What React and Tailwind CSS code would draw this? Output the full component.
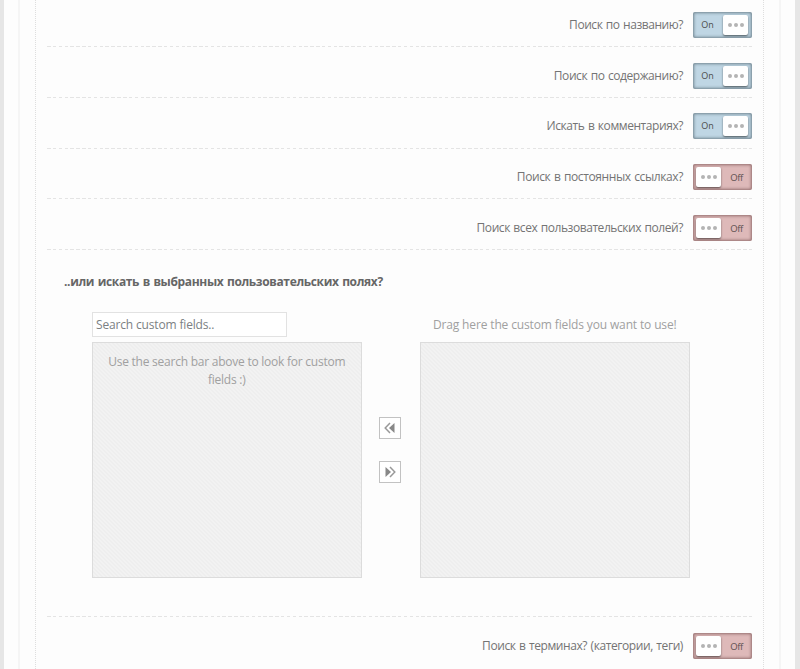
import React from "react";

const rows = [
  { label: "Поиск по названию?", on: true, row: "h-[47px] pt-[12px]", text: "tracking-[-0.45px]" },
  { label: "Поиск по содержанию?", on: true, row: "h-[51px] pt-[16px]", text: "tracking-[-0.43px]" },
  { label: "Искать в комментариях?", on: true, row: "h-[51px] pt-[15px]", text: "tracking-[-0.43px]" },
  { label: "Поиск в постоянных ссылках?", on: false, row: "h-[50px] pt-[15px]", text: "tracking-[-0.39px]" },
  { label: "Поиск всех пользовательских полей?", on: false, row: "h-[51px] pt-[16px]", text: "tracking-[-0.44px]" },
];

function DashedLine() {
  return (
    <div className="h-px w-full shrink-0 bg-[repeating-linear-gradient(90deg,#e4e4e4_0_3.5px,transparent_3.5px_5.85px)]" />
  );
}

function Knob() {
  return (
    <span className="flex h-[20px] w-[25px] items-center justify-center gap-[2px] rounded-[2px] bg-white shadow-[0_1px_2px_rgba(0,0,0,0.55)]">
      <i className="size-[4px] rounded-full bg-[#b4b4b4]" />
      <i className="size-[4px] rounded-full bg-[#b4b4b4]" />
      <i className="size-[4px] rounded-full bg-[#b4b4b4]" />
    </span>
  );
}

function Toggle({ on }) {
  return on ? (
    <div className="flex h-[26px] w-[59px] shrink-0 items-center justify-between rounded-[2px] bg-[#bfd6e4] pr-[4px] shadow-[inset_0_0_3px_1px_rgba(50,65,75,0.55)]">
      <span className="w-[29px] text-center text-[9px] font-medium text-[#4c4c4c]">On</span>
      <Knob />
    </div>
  ) : (
    <div className="flex h-[26px] w-[59px] shrink-0 items-center justify-between rounded-[2px] bg-[#deb9b9] pl-[3px] shadow-[inset_0_0_3px_1px_rgba(85,50,50,0.55)]">
      <Knob />
      <span className="w-[31px] pt-[2px] text-center text-[9.5px] font-medium tracking-[-0.4px] text-[#5e5252]">Off</span>
    </div>
  );
}

function SettingRow({ label, on, row, text }) {
  return (
    <div className={`flex flex-col justify-between ${row}`}>
      <div className="flex h-[26px] justify-end gap-[10px]">
        <span className={`[word-spacing:0.8px] whitespace-nowrap leading-[25px] ${text}`}>{label}</span>
        <Toggle on={on} />
      </div>
      <DashedLine />
    </div>
  );
}

function Box({ children }) {
  return (
    <div className="h-[236px] w-full border border-[#dcdcdc] bg-[linear-gradient(45deg,#f2f2f2_25%,#eeeeee_25%_50%,#f2f2f2_50%_75%,#eeeeee_75%)] bg-size-[4px_4px] bg-clip-padding px-[10px] pt-[10px] text-center leading-[18px] tracking-[-0.24px] text-[#a0a0a0]">
      {children}
    </div>
  );
}

function ArrowButton({ right }) {
  return (
    <button className="flex size-[22px] items-center justify-center border border-[#c2c2c2] bg-white">
      <svg width="12" height="12" viewBox="0 0 12 12" className={right ? "rotate-180" : ""}>
        <path d="M6 1 1.2 6 6 11" fill="none" stroke="#999" strokeWidth="1.5" />
        <path d="M10.5 1v10L5 6z" fill="#888" />
      </svg>
    </button>
  );
}

export default function App() {
  return (
    <div className="flex h-[669px] w-[800px] overflow-hidden border-l-4 border-r-5 border-[#e6e6e6] bg-[#fdfdfd] font-['Open_Sans','Noto_Sans',sans-serif] text-[12px] text-[#747474]">
      <div className="ml-[14px] flex w-[763px] shrink-0 border-x-2 border-[#f5f5f5] pl-[15px]">
        <main className="w-[729px] shrink-0 border-x border-dotted border-[#dedede] pr-[11px] pl-[11px]">
          {rows.map((r) => (
            <SettingRow key={r.label} {...r} />
          ))}
          <section className="flex h-[367px] flex-col">
            <h2 className="mt-[22px] ml-[17px] h-[20px] leading-[20px] font-bold tracking-[-0.35px] [word-spacing:0.8px] whitespace-nowrap text-[#666]">
              ..или искать в выбранных пользовательских полях?
            </h2>
            <div className="mt-[20px] ml-[45px] flex">
              <div className="w-[269.5px]">
                <div className="mb-[5px] h-[25px] w-[195px] border border-[#e2e2e2] bg-white pl-[3px] leading-[24px] tracking-[-0.16px] whitespace-nowrap text-[#7b7f83]">
                  Search custom fields..
                </div>
                <Box>Use the search bar above to look for custom fields :)</Box>
              </div>
              <div className="flex w-[58.5px] flex-col gap-[22px] pt-[105px] pl-[17.5px]">
                <ArrowButton />
                <ArrowButton right />
              </div>
              <div className="w-[269.5px]">
                <div className="mb-[5px] h-[25px] text-center leading-[25px] tracking-[-0.14px] whitespace-nowrap text-[#a0a0a0]">
                  Drag here the custom fields you want to use!
                </div>
                <Box />
              </div>
            </div>
            <div className="mt-auto">
              <DashedLine />
            </div>
          </section>
          <SettingRow label="Поиск в терминах? (категории, теги)" row="h-[60px] pt-[16px]" text="tracking-[-0.42px]" />
        </main>
      </div>
    </div>
  );
}
